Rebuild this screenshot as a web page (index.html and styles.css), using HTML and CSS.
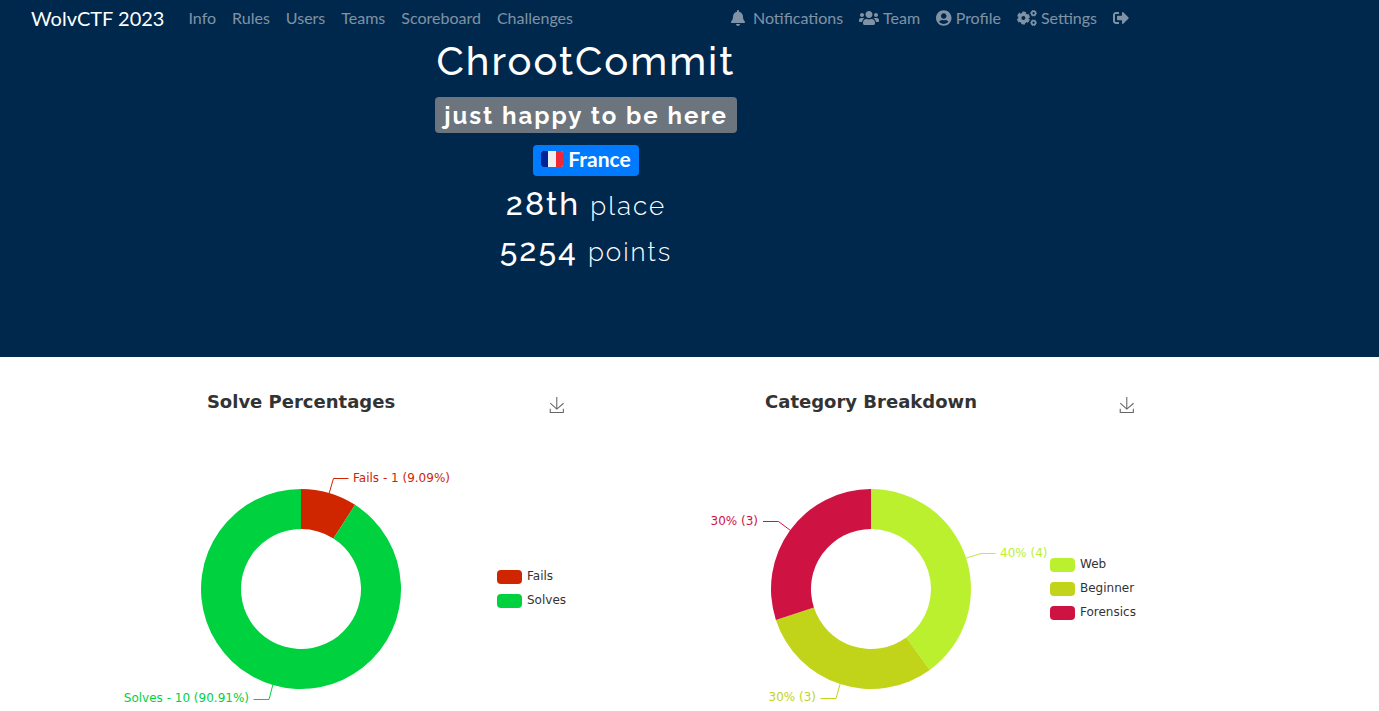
FILE: index.html
```html
<!DOCTYPE html>
<html lang="en">
<head>
<meta charset="utf-8">
<meta name="viewport" content="width=device-width, initial-scale=1">
<title>WolvCTF 2023</title>
<link rel="stylesheet" href="styles.css">
</head>
<body>
<header class="hero">
  <nav class="navbar container">
    <a class="brand" href="#">WolvCTF 2023</a>
    <ul class="nav-list">
      <li><a class="nav-link" href="#">Info</a></li>
      <li><a class="nav-link" href="#">Rules</a></li>
      <li><a class="nav-link" href="#">Users</a></li>
      <li><a class="nav-link" href="#">Teams</a></li>
      <li><a class="nav-link" href="#">Scoreboard</a></li>
      <li><a class="nav-link" href="#">Challenges</a></li>
    </ul>
    <ul class="nav-list nav-user">
      <li><a class="nav-link nav-link-wide" href="#"><svg class="icon" viewBox="0 0 448 512" aria-hidden="true"><path d="M224 512c35.32 0 63.97-28.65 63.97-64H160.03c0 35.35 28.65 64 63.97 64zm215.39-149.71c-19.32-20.76-55.47-51.99-55.47-154.29 0-77.7-54.48-139.9-127.94-155.16V32c0-17.67-14.32-32-31.98-32s-31.98 14.33-31.98 32v20.84C118.56 68.1 64.08 130.3 64.08 208c0 102.3-36.15 133.53-55.47 154.29-6 6.45-8.66 14.16-8.61 21.71.11 16.4 12.98 32 32.1 32h383.8c19.12 0 32-15.6 32.1-32 .05-7.55-2.61-15.27-8.61-21.71z"/></svg>Notifications</a></li>
      <li><a class="nav-link" href="#"><svg class="icon" viewBox="0 0 640 512" aria-hidden="true"><path d="M96 224c35.3 0 64-28.7 64-64s-28.7-64-64-64-64 28.7-64 64 28.7 64 64 64zm448 0c35.3 0 64-28.7 64-64s-28.7-64-64-64-64 28.7-64 64 28.7 64 64 64zm32 32h-64c-17.6 0-33.5 7.1-45.1 18.6 40.3 22.1 68.9 62 75.1 109.4h66c17.7 0 32-14.3 32-32v-32c0-35.3-28.7-64-64-64zm-256 0c61.9 0 112-50.1 112-112S381.9 32 320 32 208 82.1 208 144s50.1 112 112 112zm76.8 32h-8.3c-20.8 10-43.9 16-68.5 16s-47.6-6-68.5-16h-8.3C179.6 288 128 339.6 128 403.2V432c0 26.5 21.5 48 48 48h288c26.5 0 48-21.5 48-48v-28.8c0-63.6-51.6-115.2-115.2-115.2zm-223.7-13.4C161.5 263.1 145.6 256 128 256H64c-35.3 0-64 28.7-64 64v32c0 17.7 14.3 32 32 32h65.9c6.3-47.4 34.9-87.3 75.2-109.4z"/></svg>Team</a></li>
      <li><a class="nav-link" href="#"><svg class="icon" viewBox="0 0 496 512" aria-hidden="true"><path d="M248 8C111 8 0 119 0 256s111 248 248 248 248-111 248-248S385 8 248 8zm0 96c48.6 0 88 39.4 88 88s-39.4 88-88 88-88-39.4-88-88 39.4-88 88-88zm0 344c-58.7 0-111.3-26.6-146.5-68.2 18.8-35.4 55.6-59.8 98.5-59.8 2.4 0 4.8.4 7.1 1.1 13 4.2 26.6 6.9 40.9 6.9 14.3 0 28-2.7 40.9-6.9 2.3-.7 4.7-1.1 7.1-1.1 42.9 0 79.7 24.4 98.5 59.8C359.3 421.4 306.7 448 248 448z"/></svg>Profile</a></li>
      <li><a class="nav-link" href="#"><svg class="icon icon-gears" viewBox="0 0 640 512" aria-hidden="true"><circle cx="205" cy="256" r="116" stroke-width="104"/><circle cx="205" cy="256" r="180" stroke-width="56" stroke-dasharray="122 66.500" stroke-dashoffset="-33"/><circle cx="530" cy="104" r="62" stroke-width="50"/><circle cx="530" cy="104" r="90" stroke-width="30" stroke-dasharray="60 34.200" stroke-dashoffset="30"/><circle cx="530" cy="408" r="62" stroke-width="50"/><circle cx="530" cy="408" r="90" stroke-width="30" stroke-dasharray="60 34.200" stroke-dashoffset="30"/></svg>Settings</a></li>
      <li><a class="nav-link" href="#" aria-label="Logout"><svg class="icon" viewBox="0 0 512 512" aria-hidden="true"><path d="M497 273L329 441c-15 15-41 4.500-41-17v-96H152c-13.300 0-24-10.700-24-24v-96c0-13.300 10.700-24 24-24h136V88c0-21.400 25.900-32 41-17l168 168c9.300 9.400 9.300 24.600 0 34zM192 436v-40c0-6.600-5.400-12-12-12H96c-17.700 0-32-14.300-32-32V160c0-17.700 14.300-32 32-32h84c6.600 0 12-5.400 12-12V76c0-6.600-5.400-12-12-12H96c-53 0-96 43-96 96v192c0 53 43 96 96 96h84c6.600 0 12-5.400 12-12z"/></svg></a></li>
    </ul>
  </nav>
  <div class="team container">
    <h1 class="team-name">ChrootCommit</h1>
    <span class="badge badge-grey">just happy to be here</span>
    <span class="badge badge-blue"><svg class="flag" viewBox="0 0 22 16" aria-hidden="true"><rect width="22" height="16" rx="2" fill="#eee"/><path d="M2 0h5v16H2a2 2 0 0 1-2-2V2a2 2 0 0 1 2-2z" fill="#002495"/><path d="M15 0h5a2 2 0 0 1 2 2v12a2 2 0 0 1-2 2h-5z" fill="#ed2939"/></svg>France</span>
    <h2 class="stat">28th <small>place</small></h2>
    <h2 class="stat">5254 <small>points</small></h2>
  </div>
</header>
<main class="charts container">
  <section class="chart">
    <div class="chart-head">
      <h3 class="chart-title">Solve Percentages</h3>
      <button class="download" type="button" aria-label="Save as image"><svg viewBox="0 0 60 60" aria-hidden="true"><path d="M4.700 22.900L29.300 45.500L54.700 23.400M4.600 43.600V58H53.800V43.600M29.200 45.100V0"/></svg></button>
    </div>
    <svg class="plot" viewBox="0 0 540 290" role="img" aria-label="Solve percentages">
      <path fill="#cf2600" d="M270 68A100 100 0 0 1 324.060 83.870L302.440 117.520A60 60 0 0 0 270 108z"/>
      <path fill="#00d13f" d="M324.060 83.870A100 100 0 1 1 270 68V108A60 60 0 1 0 302.440 117.520z"/>
      <path class="leader" stroke="#cf2600" d="M298.200 72L302.500 57.500H317.500"/>
      <text x="322" y="61" fill="#cf2600">Fails - 1 (9.09%)</text>
      <path class="leader" stroke="#00d13f" d="M241.800 264L238 278.500H222.500"/>
      <text x="218" y="281" text-anchor="end" fill="#00d13f">Solves - 10 (90.91%)</text>
      <rect x="466" y="149" width="25" height="14" rx="4" fill="#cf2600"/>
      <text class="legend" x="496" y="159">Fails</text>
      <rect x="466" y="173" width="25" height="14" rx="4" fill="#00d13f"/>
      <text class="legend" x="496" y="183">Solves</text>
    </svg>
  </section>
  <section class="chart">
    <div class="chart-head">
      <h3 class="chart-title">Category Breakdown</h3>
      <button class="download" type="button" aria-label="Save as image"><svg viewBox="0 0 60 60" aria-hidden="true"><path d="M4.700 22.900L29.300 45.500L54.700 23.400M4.600 43.600V58H53.800V43.600M29.200 45.100V0"/></svg></button>
    </div>
    <svg class="plot" viewBox="0 0 540 290" role="img" aria-label="Category breakdown">
      <path fill="#bbf02f" d="M270 68A100 100 0 0 1 328.780 248.900L305.270 216.540A60 60 0 0 0 270 108z"/>
      <path fill="#c2d419" d="M328.780 248.900A100 100 0 0 1 174.890 198.900L212.940 186.540A60 60 0 0 0 305.270 216.540z"/>
      <path fill="#ce1242" d="M174.890 198.900A100 100 0 0 1 270 68V108A60 60 0 0 0 212.940 186.540z"/>
      <path class="leader" stroke="#bbf02f" d="M365.100 137.100L380 132.500H394.500"/>
      <text x="399" y="136" fill="#bbf02f">40% (4)</text>
      <path class="leader" stroke="#c2d419" d="M239.100 263.100L235 277.500H219.500"/>
      <text x="215" y="280" text-anchor="end" fill="#c2d419">30% (3)</text>
      <path class="leader" stroke="#ce1242" d="M189.100 109.200L177.500 100.500H162"/>
      <text x="157" y="104" text-anchor="end" fill="#ce1242">30% (3)</text>
      <rect x="449" y="137" width="25" height="14" rx="4" fill="#bbf02f"/>
      <text class="legend" x="479" y="147">Web</text>
      <rect x="449" y="161" width="25" height="14" rx="4" fill="#c2d419"/>
      <text class="legend" x="479" y="171">Beginner</text>
      <rect x="449" y="185" width="25" height="14" rx="4" fill="#ce1242"/>
      <text class="legend" x="479" y="195">Forensics</text>
    </svg>
  </section>
</main>
</body>
</html>
```

FILE: styles.css
```css
* { box-sizing: border-box; }

body {
  margin: 0;
  background: #fff;
  color: #333;
  font-family: Lato, "Open Sans", sans-serif;
  font-size: 16px;
  line-height: 24px;
}

.container {
  max-width: 1140px;
  margin-left: 16px;
  padding: 0 15px;
}

.hero {
  background: #00274c;
  color: #fff;
  padding-bottom: 80px;
}

.navbar {
  display: flex;
  align-items: center;
  padding-right: 19px;
}

.brand {
  margin-right: 16px;
  color: #fff;
  font-size: 20px;
  line-height: 36px;
  text-decoration: none;
  white-space: nowrap;
}

.nav-list {
  display: flex;
  align-items: center;
  margin: 0;
  padding: 0;
  list-style: none;
}

.nav-user { margin-left: auto; }

.nav-link {
  display: flex;
  align-items: center;
  gap: 4px;
  padding: 0 8px;
  color: rgba(255, 255, 255, 0.5);
  text-decoration: none;
}

.nav-link-wide { gap: 8px; }

.icon {
  height: 16px;
  fill: currentColor;
}

/* Strokes overlap between ring and teeth, so the tint is applied to the group. */
.icon-gears {
  color: #fff;
  opacity: 0.5;
}

.icon-gears circle {
  fill: none;
  stroke: currentColor;
}

.team {
  display: flex;
  flex-direction: column;
  align-items: center;
  font-family: Raleway, Lato, sans-serif;
}

.team-name {
  margin: 0 0 12px;
  font-size: 40px;
  font-weight: 500;
  line-height: 49px;
  letter-spacing: 2px;
}

.badge {
  display: flex;
  align-items: center;
  border-radius: 4px;
  font-weight: 700;
}

.badge-grey {
  margin-bottom: 12px;
  padding: 3px 9px 1px;
  background: #6c757d;
  font-size: 24px;
  line-height: 32px;
  letter-spacing: 2px;
}

.badge-blue {
  gap: 5px;
  margin-bottom: 9px;
  padding: 1px 8px 5px;
  background: #007bff;
  font-family: Lato, sans-serif;
  font-size: 21px;
  line-height: 25px;
}

.flag {
  width: 22px;
  height: 16px;
}

.stat {
  margin: 0 0 8px;
  font-size: 32px;
  font-weight: 500;
  line-height: 38px;
  letter-spacing: 2px;
}

.stat small {
  font-size: 26px;
  font-weight: 300;
  line-height: 26px;
}

.charts {
  display: grid;
  grid-template-columns: 1fr 1fr;
  gap: 30px;
  padding-top: 32px;
}

.chart-head {
  display: grid;
  grid-template-columns: 32px 1fr 32px;
  align-items: center;
  height: 32px;
}

.chart-title {
  grid-column: 2;
  margin: 0;
  padding-bottom: 6px;
  font-family: "DejaVu Sans", sans-serif;
  font-size: 18px;
  font-weight: 700;
  line-height: 22px;
  text-align: center;
}

.download {
  display: flex;
  justify-content: flex-end;
  padding: 0 6px 1px 0;
  border: 0;
  background: none;
}

.download svg {
  width: 16px;
  height: 16px;
  fill: none;
  stroke: #666;
  stroke-width: 4;
}

.plot {
  display: block;
  width: 100%;
  font-family: "DejaVu Sans", sans-serif;
  font-size: 12px;
}

.leader {
  fill: none;
  stroke-width: 1;
}

.legend { fill: #333; }
```
